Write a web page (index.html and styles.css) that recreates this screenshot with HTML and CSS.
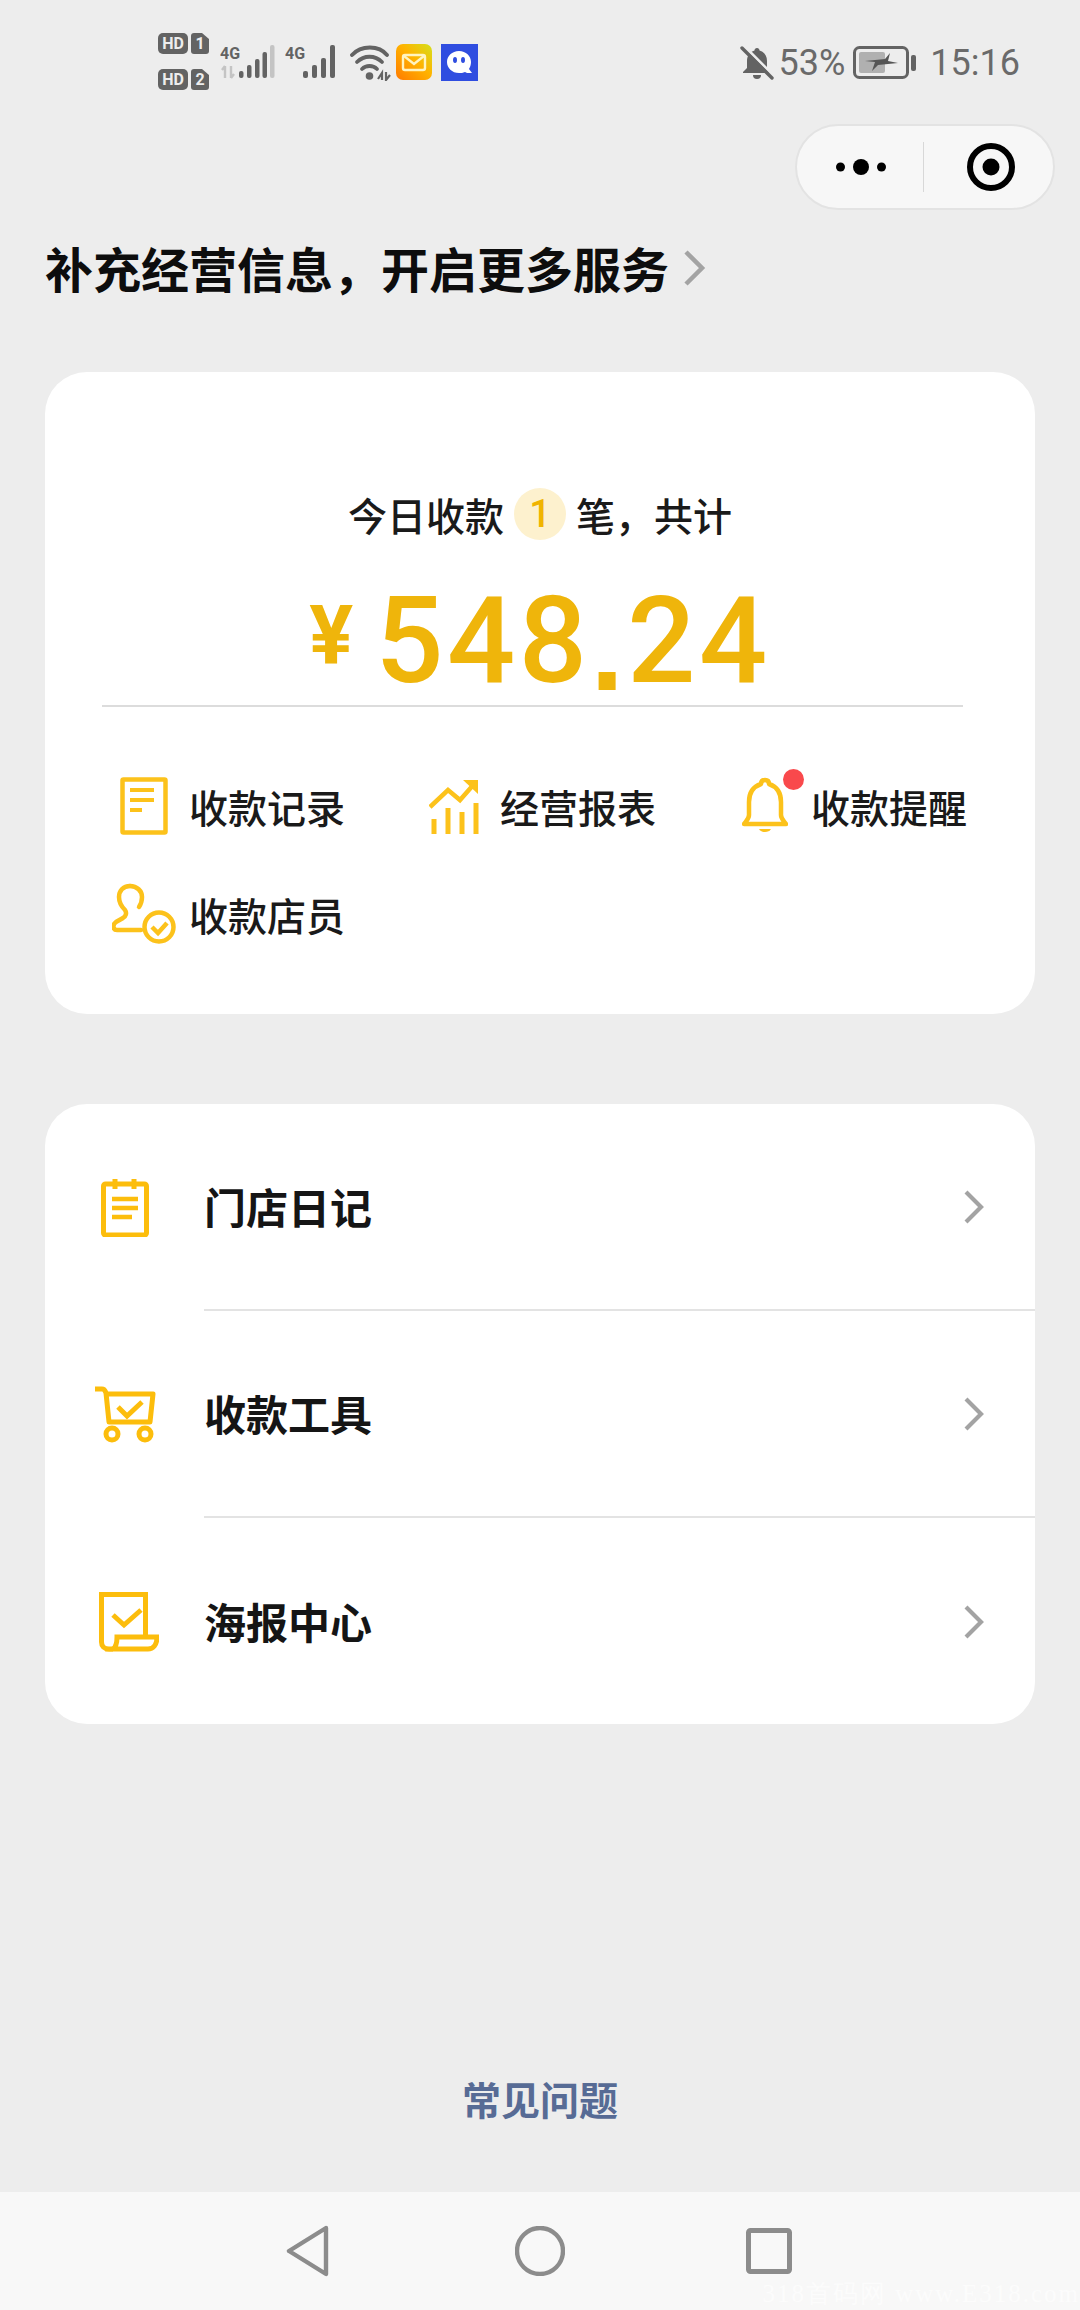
FILE: index.html
```html
<!DOCTYPE html>
<html lang="zh">
<head>
<meta charset="utf-8">
<title>收款</title>
<link rel="stylesheet" href="styles.css">
</head>
<body>
<div class="page">
  <header class="status">
    <div class="status-left">
      <svg class="sim" width="52" height="60" viewBox="0 0 52 60">
        <rect x="0" y="1" width="30" height="21" rx="5" fill="#636363"/>
        <text x="15" y="17" class="sim-t">HD</text>
        <path d="M36 1h8l7 6v12a3 3 0 0 1-3 3h-12a3 3 0 0 1-3-3V4a3 3 0 0 1 3-3z" fill="#636363"/>
        <text x="42" y="17" class="sim-t">1</text>
        <rect x="0" y="37" width="30" height="21" rx="5" fill="#636363"/>
        <text x="15" y="53" class="sim-t">HD</text>
        <path d="M36 37h8l7 6v12a3 3 0 0 1-3 3h-12a3 3 0 0 1-3-3V40a3 3 0 0 1 3-3z" fill="#636363"/>
        <text x="42" y="53" class="sim-t">2</text>
      </svg>
      <svg class="sig" width="55" height="36" viewBox="0 0 55 36">
        <text x="0" y="15" class="sig-t">4G</text>
        <path d="M5 22v12M2 26l3-4M11 34V22M11 34l3-4" stroke="#c4c4c4" stroke-width="2.400" fill="none"/>
        <g fill="#636363"><rect x="19" y="27" width="4.500" height="7" rx="2"/><rect x="27" y="21" width="4.500" height="13" rx="2"/><rect x="35" y="15" width="4.500" height="19" rx="2"/><rect x="42.500" y="8" width="4.500" height="26" rx="2"/></g>
        <rect x="50" y="1" width="4.500" height="33" rx="2" fill="#c4c4c4"/>
      </svg>
      <svg class="sig" width="55" height="36" viewBox="0 0 55 36">
        <text x="0" y="15" class="sig-t">4G</text>
        <g fill="#636363"><rect x="18" y="27" width="5" height="7" rx="2"/><rect x="27" y="21" width="5" height="13" rx="2"/><rect x="36" y="14" width="5" height="20" rx="2"/><rect x="45" y="1" width="5" height="33" rx="2"/></g>
      </svg>
      <svg class="wifi" width="42" height="36" viewBox="0 0 42 36">
        <g fill="none" stroke="#636363" stroke-width="3.800" stroke-linecap="round"><path d="M2 10C11 0 29 0 37 10"/><path d="M7 17C14 10 25 10 32 17"/><path d="M12 24C16 20 23 20 27 24"/></g>
        <circle cx="19.500" cy="31" r="3.800" fill="#636363"/>
        <path d="M28 34l4-6v7M36 27v8l4-5" stroke="#636363" stroke-width="2.200" fill="none"/>
      </svg>
      <svg class="app" width="36" height="36" viewBox="0 0 36 36">
        <defs><linearGradient id="mailg" x1="0" y1="1" x2="1" y2="0"><stop offset="0" stop-color="#ff7a00"/><stop offset=".55" stop-color="#ffb300"/><stop offset="1" stop-color="#d4e01c"/></linearGradient></defs>
        <rect width="36" height="36" rx="7" fill="url(#mailg)"/>
        <rect x="7" y="11" width="22" height="15" rx="2" fill="none" stroke="#fff4c0" stroke-width="2.400"/>
        <path d="M8 12l10 8 10-8" fill="none" stroke="#fff4c0" stroke-width="2.400"/>
      </svg>
      <svg class="app qq" width="37" height="37" viewBox="0 0 37 37">
        <rect width="37" height="37" fill="#2f4de0"/>
        <path d="M18 7c7 0 12 5 12 11 0 3-1 5-2 7l3 4h-5l-2-1c-2 1-4 1-6 1-7 0-12-5-12-11S11 7 18 7z" fill="#fff"/>
        <ellipse cx="14" cy="16" rx="2" ry="3" fill="#2f4de0"/><ellipse cx="22" cy="16" rx="2" ry="3" fill="#2f4de0"/>
      </svg>
    </div>
    <div class="status-right">
      <svg class="mute" width="34" height="36" viewBox="0 0 34 36">
        <path d="M17 3c-1.500 0-2.500 1-2.500 2.500C9.500 7 7 11 7 16v7l-4 4v1h28v-1l-4-4v-7c0-5-2.500-9-7.500-10.500C19.500 4 18.500 3 17 3z" fill="#636363"/>
        <path d="M13 30h8a4 4 0 0 1-8 0z" fill="#636363"/>
        <path d="M4 1l31 31" stroke="#ededed" stroke-width="3"/>
        <path d="M2 3l30 30" stroke="#636363" stroke-width="3.400" stroke-linecap="round"/>
      </svg>
      <span class="pct">53%</span>
      <svg class="batt" width="64" height="34" viewBox="0 0 64 34">
        <rect x="1.500" y="1.500" width="53" height="30" rx="5" fill="none" stroke="#636363" stroke-width="3"/>
        <rect x="6" y="6" width="26" height="21" rx="2" fill="#b0b0b0"/>
        <path d="M12 15l20-2 5-6-2 8 10 2-20 2-6 6 3-9z" fill="#555"/>
        <rect x="58" y="9" width="5" height="16" rx="2" fill="#636363"/>
      </svg>
      <span class="clock">15:16</span>
    </div>
  </header>

  <div class="capsule-row">
    <div class="capsule">
      <div class="cap-cell dots">
        <svg width="50" height="16" viewBox="0 0 50 16"><circle cx="4.500" cy="8" r="4.500" fill="#000"/><circle cx="25" cy="8" r="8" fill="#000"/><circle cx="45.500" cy="8" r="4.500" fill="#000"/></svg>
      </div>
      <div class="cap-sep"></div>
      <div class="cap-cell target">
        <svg width="48" height="48" viewBox="0 0 48 48"><circle cx="24" cy="24" r="21" fill="none" stroke="#000" stroke-width="6"/><circle cx="24" cy="24" r="8.500" fill="#000"/></svg>
      </div>
    </div>
  </div>

  <main class="content">
    <div class="headline">
      <h1>补充经营信息，开启更多服务</h1>
      <svg class="chev-lg" width="23" height="38" viewBox="0 0 23 38"><path d="M3 3l16 16L3 35" fill="none" stroke="#a3a3a3" stroke-width="4.500"/></svg>
    </div>

    <section class="card summary">
      <p class="today">今日收款<span class="badge">1</span>笔，共计</p>
      <div class="amount"><span class="yen">¥</span><span class="num">548<span class="dot">.</span>24</span></div>
      <div class="rule"></div>
      <div class="actions">
        <div class="action">
          <span class="a-icon">
            <svg width="48" height="58" viewBox="0 0 48 58"><rect x="2.500" y="2.500" width="43" height="53" rx="1" fill="none" stroke="#fcc21b" stroke-width="4.500"/><path d="M10 13h24M10 23h24M10 33h12" stroke="#fcc21b" stroke-width="4" fill="none"/></svg>
          </span>
          <span class="a-label">收款记录</span>
        </div>
        <div class="action">
          <span class="a-icon">
            <svg width="50" height="56" viewBox="0 0 50 56"><path d="M1 29L19 12l12 10L46 5" fill="none" stroke="#fcc21b" stroke-width="4.500"/><path d="M34 2h15v14z" fill="#fcc21b"/><path d="M5 41v15M19 30v26M33 34v22M47 25v31" stroke="#fcc21b" stroke-width="5"/></svg>
          </span>
          <span class="a-label">经营报表</span>
        </div>
        <div class="action">
          <span class="a-icon bell">
            <svg width="46" height="58" viewBox="0 0 46 58"><path d="M23 3c-3 0-4 2-4 4C10 10 7 17 7 25v13c0 4-3 6-5 9h42c-2-3-5-5-5-9V25c0-8-3-15-12-18 0-2-1-4-4-4z" fill="none" stroke="#fcc21b" stroke-width="4.500" stroke-linejoin="round"/><path d="M17 52h12c-2 4-10 4-12 0z" fill="#fcc21b"/></svg>
            <span class="red-dot"></span>
          </span>
          <span class="a-label">收款提醒</span>
        </div>
        <div class="action">
          <span class="a-icon person">
            <svg width="64" height="62" viewBox="0 0 64 62"><path d="M18 3c-7 0-11 5-11 11 0 6 3 10 6 13 2 3 1 6-2 8L4 39c-4 3-3 8 1 8h24" fill="none" stroke="#fcc21b" stroke-width="4.500" stroke-linecap="round"/><path d="M18 3c7 0 12 5 12 11 0 4-1 7-3 10" fill="none" stroke="#fcc21b" stroke-width="4.500" stroke-linecap="round"/><circle cx="47" cy="44" r="14.500" fill="#fff" stroke="#fcc21b" stroke-width="4.500"/><path d="M40 44l6 6 9-10" fill="none" stroke="#fcc21b" stroke-width="4.500"/></svg>
          </span>
          <span class="a-label">收款店员</span>
        </div>
      </div>
    </section>

    <section class="card menu">
      <div class="row">
        <span class="r-icon">
          <svg width="48" height="58" viewBox="0 0 48 58"><rect x="2.500" y="5" width="43" height="51" rx="2" fill="none" stroke="#fcbd0c" stroke-width="5"/><path d="M14 0v10M33 0v10" stroke="#fcbd0c" stroke-width="5"/><path d="M11 20h26M11 29h26M11 38h20" stroke="#fcbd0c" stroke-width="4.500"/></svg>
        </span>
        <span class="r-body"><span class="r-title">门店日记</span><svg class="chev" width="22" height="36" viewBox="0 0 22 36"><path d="M3 3l15 15L3 33" fill="none" stroke="#a3a3a3" stroke-width="4.200"/></svg></span>
      </div>
      <div class="row">
        <span class="r-icon">
          <svg width="62" height="58" viewBox="0 0 62 58"><path d="M1 3h7c3 0 3 2 4 4l3 29h41l3-28H12" fill="none" stroke="#fcbd0c" stroke-width="5" stroke-linejoin="round"/><path d="M24 21l9 9 15-14" fill="none" stroke="#fcbd0c" stroke-width="5"/><circle cx="18" cy="48" r="6" fill="none" stroke="#fcbd0c" stroke-width="5"/><circle cx="51" cy="48" r="6" fill="none" stroke="#fcbd0c" stroke-width="5"/></svg>
        </span>
        <span class="r-body"><span class="r-title">收款工具</span><svg class="chev" width="22" height="36" viewBox="0 0 22 36"><path d="M3 3l15 15L3 33" fill="none" stroke="#a3a3a3" stroke-width="4.200"/></svg></span>
      </div>
      <div class="row">
        <span class="r-icon poster">
          <svg width="60" height="60" viewBox="0 0 60 60"><path d="M14 57H10C5 57 2.500 54 2.500 50V2.500h44V45" fill="none" stroke="#fcbd0c" stroke-width="5"/><path d="M18 45h40c0 8-4 12-9 12H14c3-2 4-7 4-12z" fill="none" stroke="#fcbd0c" stroke-width="5"/><path d="M14 23l11 10 17-15" fill="none" stroke="#fcbd0c" stroke-width="5"/></svg>
        </span>
        <span class="r-body"><span class="r-title">海报中心</span><svg class="chev" width="22" height="36" viewBox="0 0 22 36"><path d="M3 3l15 15L3 33" fill="none" stroke="#a3a3a3" stroke-width="4.200"/></svg></span>
      </div>
    </section>

    <div class="faq-wrap"><a class="faq">常见问题</a></div>
  </main>

  <footer class="navbar">
    <svg width="44" height="52" viewBox="0 0 44 52"><path d="M40 3L3 26l37 23z" fill="none" stroke="#8c8c8c" stroke-width="4.400" stroke-linejoin="round"/></svg>
    <svg width="50" height="50" viewBox="0 0 50 50"><circle cx="25" cy="25" r="23" fill="none" stroke="#8c8c8c" stroke-width="4.400"/></svg>
    <svg width="46" height="46" viewBox="0 0 46 46"><rect x="2.500" y="2.500" width="41" height="41" rx="2" fill="none" stroke="#8c8c8c" stroke-width="5"/></svg>
    <span class="watermark">318首码网 www.E318.com</span>
  </footer>
</div>
</body>
</html>
```

FILE: styles.css
```css
* { box-sizing: border-box; }
html, body { margin: 0; padding: 0; }
body {
  width: 1080px;
  height: 2310px;
  background: #ededed;
  font-family: "Noto Sans CJK SC", "Noto Sans", sans-serif;
  color: #1a1a1a;
  overflow: hidden;
}
.page { display: flex; flex-direction: column; height: 2310px; }

/* status bar */
.status {
  height: 124px;
  flex: none;
  display: flex;
  justify-content: space-between;
  padding: 32px 60px 0 158px;
}
.status-left { display: flex; align-items: flex-start; }
.sim { margin-right: 10px; }
.sim-t { font: 700 16px "Roboto", sans-serif; fill: #ededed; text-anchor: middle; }
.sig { margin: 12px 10px 0 0; }
.sig-t { font: 700 16px "Roboto", sans-serif; fill: #636363; }
.wifi { margin: 13px 4px 0 0; }
.app { margin: 12px 7px 0 0; }
.app.qq { margin-left: 2px; }
.status-right { display: flex; align-items: flex-start; padding-top: 13px; }
.mute { margin-right: 5px; }
.pct, .clock {
  font-family: "Roboto", sans-serif;
  font-weight: 400;
  font-size: 36px;
  line-height: 36px;
  color: #6a6a6a;
}
.batt { margin: 1px 13px 0 8px; }

/* capsule */
.capsule-row { flex: none; display: flex; justify-content: flex-end; padding-right: 25px; }
.capsule {
  width: 260px;
  height: 86px;
  border-radius: 43px;
  background: #f7f7f7;
  border: 2px solid #e3e3e3;
  display: flex;
  align-items: center;
}
.cap-cell { flex: 1 1 0; min-width: 0; display: flex; align-items: center; justify-content: center; }
.cap-cell.dots { padding-left: 2px; }
.cap-cell.target { padding-left: 6px; }
.cap-sep { width: 1px; height: 50px; background: #d8d8d8; }

/* content */
.content { flex: 1; display: flex; flex-direction: column; padding: 0 45px; }
.headline { height: 162px; flex: none; display: flex; align-items: flex-start; padding-top: 24px; }
.headline h1 {
  margin: 0;
  font-size: 48px;
  line-height: 66px;
  font-weight: 700;
  color: #0d0d0d;
}
.chev-lg { margin: 15px 0 0 14px; }

.card { background: #fff; border-radius: 42px; flex: none; }
.summary { height: 642px; padding: 110px 0 0 57px; }
.today {
  margin: 0;
  width: 876px;
  height: 64px;
  display: flex;
  justify-content: center;
  align-items: center;
  font-size: 39px;
  font-weight: 500;
  line-height: 64px;
  color: #1a1a1a;
}
.badge {
  width: 52px;
  height: 52px;
  margin: 0 10px;
  border-radius: 50%;
  background: #fdf1ce;
  color: #f0b400;
  font-family: "Roboto", sans-serif;
  font-size: 38px;
  font-weight: 500;
  line-height: 52px;
  text-align: center;
}
.amount {
  width: 876px;
  height: 159px;
  display: flex;
  justify-content: center;
  align-items: flex-start;
  color: #efb50b;
  font-family: "Roboto", sans-serif;
  font-weight: 500;
  padding-top: 33px;
}
.yen { font-size: 82px; line-height: 100px; font-weight: 700; margin-right: 22px; margin-top: 6px; }
.num { font-size: 120px; line-height: 124px; letter-spacing: 3.500px; white-space: nowrap; }
.dot {
  font-family: "Liberation Sans", sans-serif;
  font-weight: 700;
  letter-spacing: 3.500px;
  vertical-align: -8px;
}
.rule { width: 861px; height: 2px; background: #dcdcdc; }
.actions {
  display: grid;
  grid-template-columns: repeat(3, 311px);
  row-gap: 38px;
  padding-top: 64px;
}
.action { display: flex; align-items: center; height: 70px; }
.a-icon { width: 87px; flex: none; display: flex; justify-content: flex-end; padding-right: 21px; position: relative; }
.a-label { font-size: 39px; font-weight: 500; line-height: 70px; color: #1a1a1a; white-space: nowrap; }
.a-icon.person { padding-right: 13px; }
.a-icon.bell { padding-right: 23px; }
.red-dot {
  position: absolute;
  top: -8px;
  right: 7px;
  width: 21px;
  height: 21px;
  border-radius: 50%;
  background: #f9494c;
}

.menu { margin-top: 90px; height: 620px; }
.row { height: 207px; display: flex; align-items: stretch; }
.r-icon { width: 159px; flex: none; display: flex; align-items: center; justify-content: center; }
.r-icon.poster { padding-left: 8px; }
.r-body {
  flex: 1;
  display: flex;
  align-items: center;
  justify-content: space-between;
  padding-right: 50px;
  border-bottom: 2px solid #e3e3e3;
}
.row:last-child .r-body { border-bottom: 0; }
.r-title { font-size: 42px; font-weight: 700; color: #151515; padding-bottom: 3px; }

.faq-wrap { flex: 1; display: flex; justify-content: center; padding-top: 346px; }
.faq { font-size: 39px; font-weight: 700; line-height: 56px; color: #576b95; height: 56px; }

/* navigation */
.navbar {
  height: 118px;
  flex: none;
  background: #f8f8f8;
  display: flex;
  align-items: center;
  padding-left: 286px;
  position: relative;
}
.navbar svg:nth-child(2) { margin-left: 185px; }
.navbar svg:nth-child(3) { margin-left: 181px; }
.watermark {
  position: absolute;
  right: 0;
  bottom: 0;
  font-family: "Liberation Serif", serif;
  font-size: 25px;
  letter-spacing: 2px;
  color: #fcfcfc;
}
```
